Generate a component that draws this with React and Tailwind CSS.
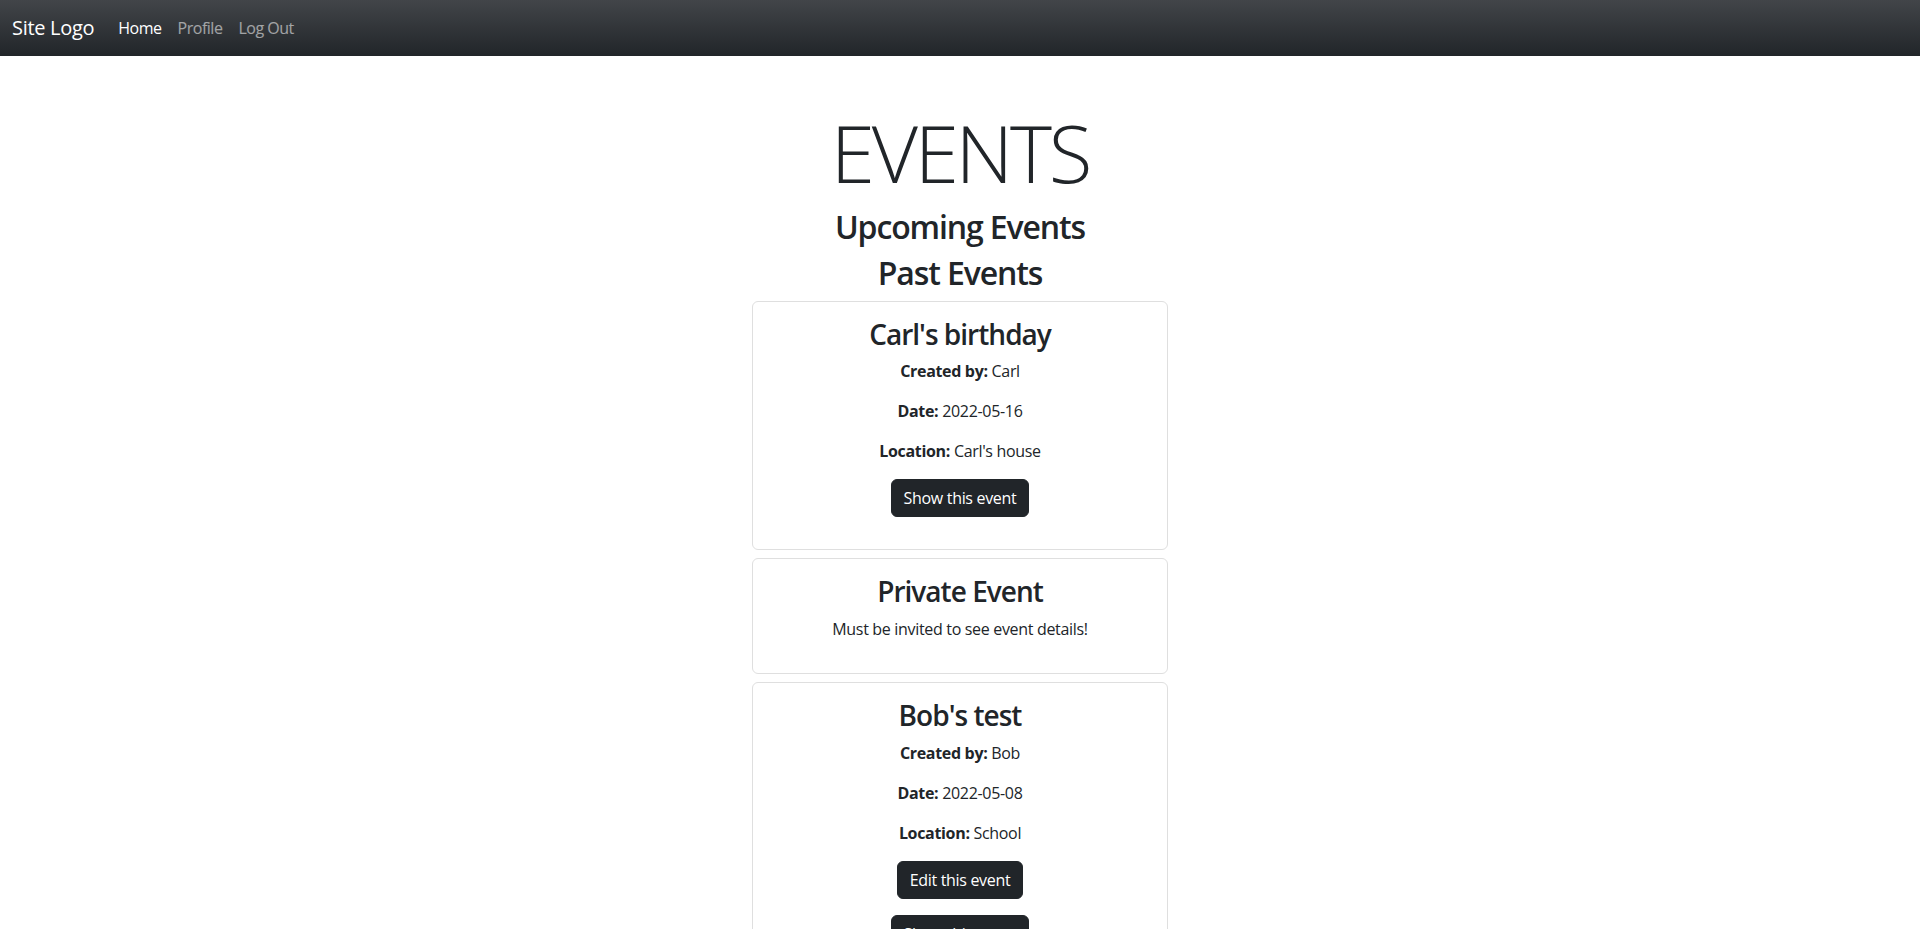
export default function App() {
  const font = { fontFamily: '"Open Sans", "Noto Sans", sans-serif' };
  return (
    <div className="min-h-screen bg-white text-[#212529]" style={font}>
      <nav className="h-[56px] flex items-center px-3 bg-[linear-gradient(180deg,#424549,#212529)]">
        <a className="text-[20px] leading-[30px] text-white mr-4 tracking-[-0.015em]">Site Logo</a>
        <ul className="flex text-[16px] leading-6 tracking-[-0.03em]">
          <li><a className="px-2 block text-white">Home</a></li>
          <li><a className="px-2 block text-white/55">Profile</a></li>
          <li><a className="px-2 block text-white/55">Log Out</a></li>
        </ul>
      </nav>
      <main className="mt-12 flex flex-col items-center text-center">
        <h1 className="text-[80px] leading-[96px] font-light mb-2 tracking-[-0.04em]">EVENTS</h1>
        <h2 className="text-[32px] leading-[38.4px] font-semibold mb-2 tracking-[-0.035em]">Upcoming Events</h2>
        <h2 className="text-[32px] leading-[38.4px] font-semibold mb-2 tracking-[-0.035em]">Past Events</h2>
        <div className="w-[416px] flex flex-col gap-2 tracking-[-0.02em]">
          <Card title="Carl's birthday" creator="Carl" date="2022-05-16" location="Carl's house" buttons={["Show this event"]} />
          <div className="border border-[#dfdfdf] rounded-[6px] p-4">
            <h3 className="text-[28px] leading-[33.6px] font-semibold mb-2 tracking-[-0.035em]">Private Event</h3>
            <p className="text-[16px] leading-6 mb-4">Must be invited to see event details!</p>
          </div>
          <Card title="Bob's test" creator="Bob" date="2022-05-08" location="School" buttons={["Edit this event", "Show this event", "Delete this event"]} />
        </div>
      </main>
    </div>
  );
}

function Card({ title, creator, date, location, buttons }) {
  return (
    <div className="border border-[#dfdfdf] rounded-[6px] p-4">
      <h3 className="text-[28px] leading-[33.6px] font-semibold mb-2 tracking-[-0.035em]">{title}</h3>
      <p className="text-[16px] leading-6 mb-4"><strong className="font-bold">Created by:</strong> {creator}</p>
      <p className="text-[16px] leading-6 mb-4"><strong className="font-bold">Date:</strong> {date}</p>
      <p className="text-[16px] leading-6 mb-4"><strong className="font-bold">Location:</strong> {location}</p>
      {buttons.map((b) => (
        <div key={b} className="mb-4">
          <button className="bg-[#212529] text-white text-[16px] leading-6 px-3 py-[6px] border border-[#212529] rounded-[6px]">{b}</button>
        </div>
      ))}
    </div>
  );
}
